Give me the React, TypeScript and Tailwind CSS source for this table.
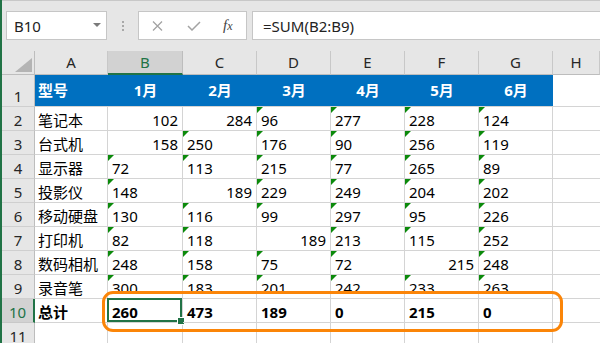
import React from "react";

type Cell = [number, "r" | "t"];

const rows: { label: string; cells: Cell[] }[] = [
  { label: "笔记本", cells: [[102, "r"], [284, "r"], [96, "t"], [277, "t"], [228, "t"], [124, "t"]] },
  { label: "台式机", cells: [[158, "r"], [250, "t"], [176, "t"], [90, "t"], [256, "t"], [119, "t"]] },
  { label: "显示器", cells: [[72, "t"], [113, "t"], [215, "t"], [77, "t"], [265, "t"], [89, "t"]] },
  { label: "投影仪", cells: [[148, "t"], [189, "r"], [229, "t"], [249, "t"], [204, "t"], [202, "t"]] },
  { label: "移动硬盘", cells: [[130, "t"], [116, "t"], [99, "t"], [297, "t"], [95, "t"], [226, "t"]] },
  { label: "打印机", cells: [[82, "t"], [118, "t"], [189, "r"], [213, "t"], [115, "t"], [252, "t"]] },
  { label: "数码相机", cells: [[248, "t"], [158, "t"], [75, "t"], [72, "t"], [215, "r"], [248, "t"]] },
  { label: "录音笔", cells: [[300, "t"], [183, "t"], [201, "t"], [242, "t"], [233, "t"], [263, "t"]] },
];

const totals = [260, 473, 189, 0, 215, 0];
const cols = ["A", "B", "C", "D", "E", "F", "G", "H"];
const months = ["1月", "2月", "3月", "4月", "5月", "6月"];

function Tri() {
  return (
    <svg className="absolute left-0 top-0" width="6" height="6" viewBox="0 0 6 6">
      <polygon points="0,0 6,0 0,6" fill="#0b8a0b" />
    </svg>
  );
}

function RowHead({ n, sel }: { n: number; sel?: boolean }) {
  return (
    <div
      className={
        sel
          ? "flex items-end justify-center bg-[#d2d2d2] border-b border-r-2 border-b-[#c8c8c8] border-r-[#217346] text-[#217346]"
          : "flex items-end justify-center bg-[#e6e6e6] border-b border-r border-b-[#cfcfcf] border-r-[#bdbdbd] text-[#262626]"
      }
    >
      <span className="leading-[20px]">{n}</span>
    </div>
  );
}

export default function App() {
  return (
    <div className="relative w-[600px] h-[343px] overflow-hidden bg-[#e6e6e6] border-l-2 border-[#217346] font-['Noto_Sans','Noto_Sans_CJK_SC',sans-serif] text-[15px] text-black">
      {/* Toolbar */}
      <div className="h-[51px] border-t border-[#c8c8c8] flex items-start pt-[10px]">
        <div className="ml-[4px] w-[101px] h-[29px] bg-white border border-[#c6c6c6] flex items-center pl-[7px] pr-[5px] text-[#222]">
          <span className="flex-1 leading-[20px] pt-px">B10</span>
          <svg width="8" height="5" viewBox="0 0 8 5">
            <polygon points="0,0 8,0 4,4" fill="#7a7a7a" />
          </svg>
        </div>
        <div className="ml-[15px] h-[29px] flex flex-col justify-center gap-[2px]">
          <div className="w-[2px] h-[2px] bg-[#a8a8a8]" />
          <div className="w-[2px] h-[2px] bg-[#a8a8a8]" />
          <div className="w-[2px] h-[2px] bg-[#a8a8a8]" />
        </div>
        <div className="ml-[14px] w-[109px] h-[29px] bg-white border border-[#c6c6c6] flex items-center">
          <svg className="ml-[13px]" width="11" height="10" viewBox="0 0 11 10">
            <path d="M1 0.5 L10 9.5 M10 0.5 L1 9.5" stroke="#a3a3a3" strokeWidth="1.3" fill="none" />
          </svg>
          <svg className="ml-[24px]" width="14" height="10" viewBox="0 0 14 10">
            <path d="M1 5 L5 9 L13 1" stroke="#a3a3a3" strokeWidth="1.5" fill="none" />
          </svg>
          <span className="ml-[22px] font-['Liberation_Serif',serif] italic text-[15px] text-[#444] leading-[16px]">
            f<span className="text-[12px]">x</span>
          </span>
        </div>
        <div className="ml-[5px] flex-1 h-[29px] bg-white border border-r-0 border-[#c6c6c6] flex items-center pl-[10px] text-[#222]">
          <span className="leading-[20px] pt-px">=SUM(B2:B9)</span>
        </div>
      </div>

      {/* Sheet grid */}
      <div className="grid grid-cols-[33px_73px_75px_74px_74px_74px_74px_74px_1fr] grid-rows-[24px_32px_repeat(10,24px)] bg-white">
        {/* corner */}
        <div className="relative bg-[#e6e6e6] border-r border-b border-[#bdbdbd]">
          <svg className="absolute right-[2px] bottom-[2px]" width="17" height="14" viewBox="0 0 17 14">
            <polygon points="17,0 17,14 0,14" fill="#b4b4b4" />
          </svg>
        </div>
        {cols.map((c) =>
          c === "B" ? (
            <div
              key={c}
              className="flex items-center justify-center bg-[#d2d2d2] border-r border-r-[#bdbdbd] border-b-2 border-b-[#217346] text-[#217346]"
            >
              {c}
            </div>
          ) : (
            <div
              key={c}
              className="flex items-center justify-center bg-[#e6e6e6] border-r border-b border-r-[#c8c8c8] border-b-[#bdbdbd] text-[#262626]"
            >
              {c}
            </div>
          )
        )}

        {/* Row 1 */}
        <RowHead n={1} />
        <div className="flex items-center pl-[3px] bg-[#0070c0] border-b border-b-[#d4d4d4] text-white font-bold">
          型号
        </div>
        {months.map((m) => (
          <div key={m} className="flex items-center justify-center bg-[#0070c0] border-b border-b-[#d4d4d4] text-white font-bold">
            {m}
          </div>
        ))}
        <div className="border-b border-[#d4d4d4]" />

        {/* Rows 2-9 */}
        {rows.map((r, i) => (
          <React.Fragment key={r.label}>
            <RowHead n={i + 2} />
            <div className="flex items-end pl-[3px] border-r border-b border-[#d4d4d4]">
              <span className="leading-[20px]">{r.label}</span>
            </div>
            {r.cells.map(([v, k], j) =>
              k === "r" ? (
                <div key={j} className="flex items-end justify-end pr-[4px] border-r border-b border-[#d4d4d4]">
                  <span className="leading-[20px]">{v}</span>
                </div>
              ) : (
                <div key={j} className="relative flex items-end pl-[4px] border-r border-b border-[#d4d4d4]">
                  <Tri />
                  <span className="leading-[20px]">{v}</span>
                </div>
              )
            )}
            <div className="border-b border-[#d4d4d4]" />
          </React.Fragment>
        ))}

        {/* Row 10 */}
        <RowHead n={10} sel />
        <div className="flex items-end pl-[3px] border-r border-b border-[#d4d4d4] font-bold">
          <span className="leading-[20px]">总计</span>
        </div>
        {totals.map((v, j) => (
          <div key={j} className="relative flex items-end pl-[4px] border-r border-b border-[#d4d4d4] font-bold">
            {j === 0 && (
              <div className="absolute -left-px -top-px right-0 bottom-0 border-2 border-[#217346]">
                <div className="absolute -right-[4px] -bottom-[4px] w-[6px] h-[6px] bg-[#217346] outline outline-1 outline-white" />
              </div>
            )}
            <span className="relative leading-[20px]">{v}</span>
          </div>
        ))}
        <div className="border-b border-[#d4d4d4]" />

        {/* Row 11 */}
        <RowHead n={11} />
        {cols.map((c) => (
          <div key={c} className={c === "H" ? "border-b border-[#d4d4d4]" : "border-r border-b border-[#d4d4d4]"} />
        ))}
      </div>

      {/* Orange annotation */}
      <div className="pointer-events-none absolute left-[100px] top-[291px] w-[461px] h-[41px] rounded-[11px] border-[3px] border-[#fb8508]" />
    </div>
  );
}
